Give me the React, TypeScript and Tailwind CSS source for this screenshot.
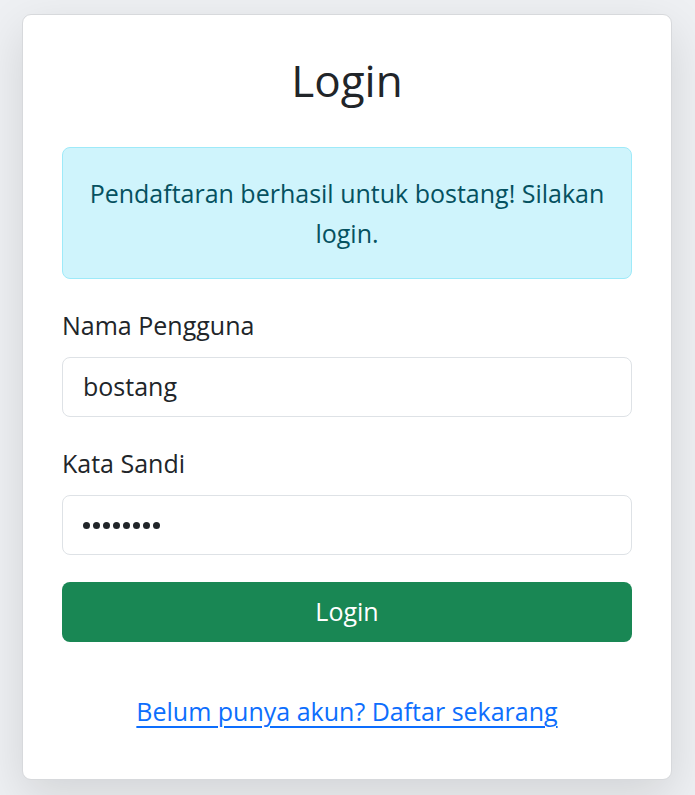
export default function App() {
  return (
    <div
      className="min-h-[795px] bg-[#eef0f3] pt-[14px] pl-[22px]"
      style={{ fontFamily: '"Open Sans", "Noto Sans", sans-serif' }}
    >
      <div className="w-[650px] h-[766px] bg-white border border-[#d7d9dc] rounded-[9px] shadow-[0_16px_48px_rgba(0,0,0,0.12)] px-[39px] pt-[39px]">
        <h1 className="text-center text-[44px] leading-[53px] text-[#212529]">Login</h1>

        <div className="mt-[40px] bg-[#cff4fc] border border-[#9eeaf9] rounded-[8px] px-[14px] py-[25px] text-center text-[25px] leading-[40px] text-[#055160]">
          Pendaftaran berhasil untuk bostang! Silakan login.
        </div>

        <label className="block mt-[28px] text-[25px] leading-[36px] text-[#212529]">Nama Pengguna</label>
        <div className="mt-[14px] h-[60px] border border-[#dee2e6] rounded-[8px] flex items-center px-[20px] text-[25px] text-[#212529]">
          bostang
        </div>

        <label className="block mt-[28px] text-[25px] leading-[36px] text-[#212529]">Kata Sandi</label>
        <div className="mt-[14px] h-[60px] border border-[#dee2e6] rounded-[8px] flex items-center px-[20px] gap-[3px]">
          {Array.from({ length: 8 }).map((_, i) => (
            <span key={i} className="w-[7px] h-[7px] rounded-full bg-[#212529]" />
          ))}
        </div>

        <button className="mt-[27px] w-full h-[60px] bg-[#198754] rounded-[8px] text-white text-[25px] leading-[36px] pb-[3px]">
          Login
        </button>

        <div className="mt-[51px] text-center text-[25px] leading-[36px]">
          <a href="#" className="text-[#0d6efd] underline underline-offset-[5px] decoration-[1.5px]">
            Belum punya akun? Daftar sekarang
          </a>
        </div>
      </div>
    </div>
  );
}
